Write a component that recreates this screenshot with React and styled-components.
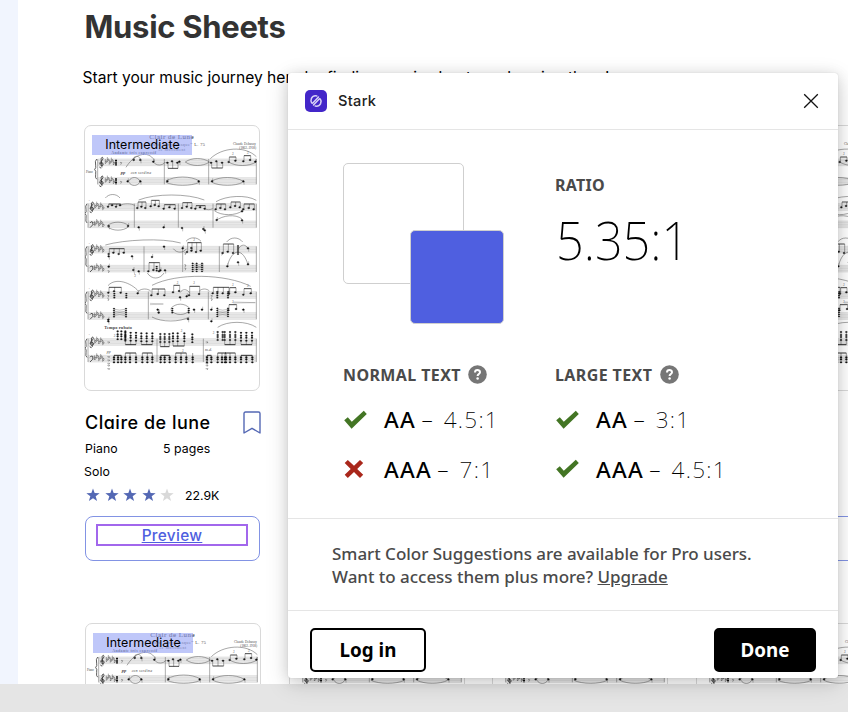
import React from "react";
import styled, { createGlobalStyle } from "styled-components";

const Global = createGlobalStyle`
  * { box-sizing: border-box; }
  html, body { margin: 0; padding: 0; overflow: hidden; }
  body { background: #e5e5e5; }
  h1, h2, h3, p { margin: 0; font-weight: inherit; }
`;

const display = `font-family: Inter, "Open Sans", sans-serif; font-feature-settings: "cv11";`;
const ui = `font-family: "Noto Sans", "Open Sans", sans-serif;`;

const Screen = styled.div`
  position: relative;
  width: 848px;
  height: 712px;
  overflow: hidden;
  background: #e5e5e5;
`;
const Page = styled.main`
  height: 684px;
  overflow: hidden;
  background: #fff;
  border-left: 18px solid #f1f5fe;
  padding-left: 66px;
  font-family: Inter, sans-serif;
  color: #000;
`;
const Title = styled.h1`
  ${display}
  font-size: 31px;
  line-height: 40px;
  padding: 7px 0 0 0.5px;
  font-weight: 700;
  letter-spacing: -0.3px;
  color: #333;
  white-space: nowrap;
`;
const Subtitle = styled.p`
  margin: 20px 0 0 -1.5px;
  font-size: 15.6px;
  line-height: 22px;
  white-space: nowrap;
`;
const Grid = styled.div`
  display: grid;
  grid-template-columns: repeat(4, 176px);
  column-gap: 27.7px;
  margin: ${(p) => (p.$second ? "62px 0 0 1px" : "36px 0 0")};
`;
const Cover = styled.div`
  position: relative;
  height: 266px;
  border: 1px solid #d9d9d9;
  border-radius: 7px;
  background: #fff;
  overflow: hidden;
`;
const Sheet = styled.svg`
  display: block;
  margin: -1px;
`;
const Level = styled.span`
  position: absolute;
  left: 7px;
  top: 9px;
  width: 100px;
  height: 20px;
  padding-left: 1px;
  background: rgba(152, 164, 246, 0.62);
  font-size: 12.4px;
  line-height: 20px;
  letter-spacing: 0.08px;
  text-align: center;
`;
const CardHead = styled.div`
  display: flex;
  justify-content: space-between;
  height: 46px;
  padding: 20px 0 0 1px;
  svg { margin-right: -1px; }
`;
const CardTitle = styled.h2`
  ${display}
  font-size: 18px;
  line-height: 24px;
  font-weight: 500;
  letter-spacing: 0.5px;
`;
const Meta = styled.div`
  display: flex;
  padding-left: ${(p) => (p.$flush ? 0 : 1)}px;
  font-size: 12.3px;
  line-height: 23px;
  letter-spacing: 0.08px;
  span:first-child { width: 78px; }
`;
const Rating = styled.div`
  display: flex;
  align-items: center;
  height: 24px;
  padding-left: 2px;
  font-size: 12.3px;
`;
const Star = styled.svg`
  margin-right: 4.5px;
`;
const RatingCount = styled.span`
  margin-left: 6.5px;
`;
const PreviewButton = styled.div`
  margin: 9px 0 0 1px;
  height: 45px;
  border: 1px solid #8293e4;
  border-radius: 8px;
  padding: 7px 11px 0 10px;
`;
const PreviewLabel = styled.div`
  ${display}
  height: 22px;
  border: 2px solid ${(p) => (p.$focused ? "#a267ec" : "transparent")};
  color: #4f5fe0;
  font-size: 15.4px;
  line-height: 19px;
  font-weight: 500;
  letter-spacing: 0.3px;
  text-align: center;
  text-decoration: underline;
`;

const Dialog = styled.section`
  position: absolute;
  left: 288px;
  top: 73px;
  width: 550px;
  height: 605px;
  display: flex;
  flex-direction: column;
  background: #fff;
  border-radius: 3px;
  box-shadow: 0 2px 14px rgba(0, 0, 0, 0.13), 0 6px 24px rgba(0, 0, 0, 0.14), 0 0 1px rgba(0, 0, 0, 0.22);
  ${ui}
`;
const DialogHeader = styled.header`
  display: flex;
  align-items: center;
  height: 57px;
  padding: 0 19px 0 17px;
  border-bottom: 1px solid #e5e5e5;
  font-family: Inter, sans-serif;
  font-size: 14.6px;
  font-weight: 500;
  letter-spacing: 0.3px;
  color: #222;
  span { flex: 1; margin-left: 11px; }
`;
const Results = styled.div`
  display: grid;
  grid-template-columns: 212px 1fr;
  grid-template-rows: 201px 1fr;
  height: 389px;
  padding: 33px 0 0 55px;
  border-bottom: 1px solid #e5e5e5;
`;
const Swatches = styled.div`
  position: relative;
`;
const Swatch = styled.div`
  position: ${(p) => (p.$front ? "absolute" : "static")};
  left: 67px;
  top: 67px;
  width: ${(p) => p.$size}px;
  height: ${(p) => p.$size}px;
  background: ${(p) => p.$color};
  border: 1px solid #cfcfcf;
  border-radius: 5px;
`;
const Label = styled.h3`
  display: flex;
  align-items: center;
  height: 22px;
  gap: 7.5px;
  font-size: 16px;
  font-weight: 700;
  letter-spacing: ${(p) => p.$tracking}px;
  color: #4a4a4a;
  white-space: nowrap;
  svg { margin-top: -1px; }
`;
const RatioBlock = styled.div`
  padding-top: 11px;
`;
const Ratio = styled.div`
  font-size: 54px;
  line-height: 66px;
  margin: 10px 0 0 1px;
  font-weight: 200;
  transform: scaleX(0.9);
  transform-origin: left;
  white-space: nowrap;
`;
const Checks = styled.div`
  svg { flex: none; }
`;
const CheckList = styled.div`
  margin-top: 9px;
`;
const Check = styled.div`
  display: flex;
  align-items: center;
  height: 49.5px;
  font-size: 22.5px;
  font-weight: 200;
  white-space: nowrap;
  svg { margin-right: 16px; }
  b { font-weight: 500; letter-spacing: 1.2px; margin-right: 5.5px; }
  span { margin-left: 11px; letter-spacing: 1.3px; }
`;
const Promo = styled.p`
  height: 92px;
  padding: 23px 44px 0;
  border-bottom: 1px solid #e5e5e5;
  font-size: 17px;
  line-height: 23px;
  font-weight: 500;
  letter-spacing: -0.03px;
  color: #4a4a4a;
  white-space: nowrap;
`;
const Footer = styled.footer`
  display: flex;
  justify-content: space-between;
  padding: 17px 22px 0;
`;
const Button = styled.button`
  width: ${(p) => p.$width}px;
  height: 44px;
  padding: 0 0 1px;
  border: 2px solid #000;
  border-radius: 5px;
  background: ${(p) => (p.$solid ? "#000" : "#fff")};
  color: ${(p) => (p.$solid ? "#fff" : "#000")};
  ${ui}
  font-size: 18.8px;
  font-weight: 700;
`;

/* Sheet music. Coordinates are in thirds of a pixel. */
const systems = [
  { x: 65, t: 123, b: 179, bars: [265, 398, 541], flats: 88 },
  { x: 36, t: 257, b: 309, bars: [175, 307, 411, 541], flats: 56 },
  { x: 36, t: 385, b: 442, bars: [204, 320, 430, 541], flats: 56 },
  { x: 36, t: 521, b: 584, bars: [217, 397, 541], flats: 56 },
  { x: 36, t: 662, b: 712, bars: [243, 382, 541], flats: 56 },
];
const beams = [
  [[274, 288, 304], 132, 151], [[405, 421, 438], 132, 150], [[458, 478], 130, 117], [[502, 522], 128, 113],
  [[96, 108, 120, 132], 264, 258], [[184, 196, 208], 268, 252], [[224, 236, 248], 263, 247], [[263, 280, 296], 270, 260],
  [[318, 332, 346], 268, 254], [[358, 372, 386], 270, 263], [[419, 433, 447], 272, 258], [[463, 477, 491], 266, 252], [[502, 518, 533], 272, 258],
  [[98, 112, 128, 143], 406, 392], [[333, 346, 360, 374], 400, 374], [[440, 455, 471], 403, 378],
  [[217, 232, 249], 458, 434],
  [[97, 114, 134], 522, 508], [[226, 245, 265], 530, 513], [[291, 309], 521, 502], [[339, 369], 530, 505], [[410, 424, 440, 457], 524, 508], [[459, 478], 525, 509], [[502, 524], 528, 512],
  [[457, 480], 575, 560],
];
const arcs = [
  [150, 148, 236, 128, 36], [232, 132, 268, 132, -12], [328, 132, 400, 132, -14], [328, 132, 400, 132, 14], [403, 122, 541, 116, 34],
  [458, 132, 540, 132, -14], [158, 189, 192, 189, 14], [158, 192, 192, 192, -14], [270, 189, 370, 189, 16], [270, 193, 370, 193, -12],
  [408, 189, 500, 189, 14], [408, 193, 500, 193, -12], [170, 124, 194, 124, 12],
  [88, 240, 132, 240, 14], [132, 262, 176, 262, 6], [188, 246, 385, 246, 20], [420, 251, 541, 247, 18], [94, 323, 158, 323, 14], [94, 326, 158, 326, -14],
  [415, 278, 500, 278, -16], [420, 308, 498, 303, 16], [385, 272, 410, 272, -4],
  [88, 381, 314, 375, 16], [330, 370, 375, 370, 14], [452, 372, 500, 372, 16], [292, 392, 332, 392, -14], [214, 465, 264, 465, -20],
  [455, 440, 516, 440, 50], [488, 392, 516, 392, 14],
  [96, 503, 188, 520, 26], [188, 519, 224, 519, 8], [228, 502, 524, 505, 38], [228, 597, 340, 597, -16], [284, 572, 342, 572, 18], [284, 576, 342, 576, -18],
  [312, 524, 340, 524, 12], [370, 519, 400, 519, 8], [425, 628, 541, 628, 20],
];
const dots = [
  [173, 126], [193, 126], [155, 190], [193, 190], [274, 190], [368, 190], [408, 190], [502, 190], [232, 131], [310, 131], [538, 131],
  [98, 324], [156, 324], [188, 328], [263, 328], [318, 330], [382, 333], [386, 337], [422, 306], [498, 307], [498, 280],
  [168, 415], [228, 417], [264, 386], [320, 391], [346, 390], [172, 456], [188, 460], [253, 457], [267, 457], [454, 445], [486, 433], [516, 439], [516, 391], [98, 446], [98, 415],
  [185, 526], [245, 575], [248, 584], [336, 603], [378, 575], [354, 575], [406, 575], [502, 575], [97, 605], [97, 610], [406, 610], [312, 538], [332, 535],
];
const stacks = [
  [486, 384, 3], [486, 402, 2], [350, 436, 5], [362, 436, 5], [378, 436, 5], [242, 446, 3],
  [114, 572, 5], [150, 572, 5], [424, 571, 5], [456, 571, 5], [115, 527, 3], [151, 527, 3], [424, 527, 3], [456, 527, 3], [289, 572, 3], [338, 572, 3],
];
const chordGroups = [
  [[125, 136, 148], 646, 0], [[148, 164, 180], 650, 680], [[196, 212, 229], 652, 680], [[253, 266, 280], 654, 686], [[291, 305, 325], 652, 684],
  [[349], 655, 672], [[425, 440], 648, 0], [[446, 462, 478], 648, 680], [[495, 511, 528], 650, 680],
];
const bassGroups = [
  [114, 126, 136], [148, 162, 180], [199, 214, 229], [254, 266, 281], [299, 315, 331], [350], [393, 406], [425, 438, 450], [447, 462, 478], [495, 511, 529],
];

function Staves() {
  return systems.map((s, i) => (
    <g key={i}>
      {[s.t, s.b].map((y) => (
        <g key={y}>
          <rect x={s.x} y={y} width={541 - s.x} height="20" fill="#000" opacity="0.06" />
          {[0, 5, 10, 15, 20].map((d) => (
            <path key={d} d={`M${s.x} ${y + d}H541`} stroke="#8c8c8c" strokeWidth="0.6" />
          ))}
        </g>
      ))}
      {[s.x, ...s.bars].map((x) => (
        <path key={x} d={`M${x} ${s.t}V${s.b + 20}`} stroke="#666" strokeWidth="1.6" />
      ))}
      <path
        d={`M${s.x - 3} ${s.t}q-6 6 -3 ${(s.b - s.t) / 3}q2 8 -3 ${(s.b + 20 - s.t) / 6}q5 4 3 ${(s.b + 20 - s.t) / 5}q-2 10 3 14`}
        fill="none" stroke="#222" strokeWidth="2.2"
      />
      {[s.t, s.b].map((y, k) => (
        <g key={y} fill="none" stroke="#111" strokeWidth="2">
          {k === 0 || i === 0 ? (
            <path d={`M${s.x + 11} ${y + 27}q-6 0 -5 -4M${s.x + 13} ${y + 25}l-3 -27q6 -7 6 1q-1 6 -8 10q-5 8 3 11q8 0 5 -7q-5 -5 -8 2`} />
          ) : (
            <path d={`M${s.x + 6} ${y + 6}q2 -6 8 -3q5 8 -8 17M${s.x + 18} ${y + 4}v2M${s.x + 18} ${y + 10}v2`} />
          )}
          {[0, 6, 12, 18, 24].map((d, n) => (
            <path key={d} strokeWidth="1.1" d={`M${s.flats + d} ${y - 4 + (n % 2 ? -3 : 4) + n}v14q6 -4 4 -8q-2 -2 -4 2`} />
          ))}
        </g>
      ))}
    </g>
  ));
}

function Score() {
  return (
    <Sheet width="176" height="266" viewBox="24 21 528 798">
      <g fontFamily="'Liberation Serif', serif" fill="#444">
        <text x="220" y="62" fontSize="21" textLength="133" stroke="#444" strokeWidth="0.3">Clair de Lune</text>
        <text x="216" y="83" fontSize="13" textLength="171">“Suite bergamasque” L. 75</text>
        <text x="247" y="99" fontSize="12" textLength="80">3e Movement</text>
        <text x="471" y="81" fontSize="10" textLength="69">Claude Debussy</text>
        <text x="490" y="93" fontSize="10" textLength="50">(1862–1918)</text>
        <text x="106" y="107" fontSize="12" fontWeight="700" textLength="134">Andante très expressif</text>
        <text x="30" y="165" fontSize="9">Piano</text>
        <text x="134" y="169" fontSize="14" fontWeight="700" fontStyle="italic">pp</text>
        <text x="164" y="168" fontSize="11" fontStyle="italic" textLength="61">con sordina</text>
        <text x="85" y="634" fontSize="13" fontWeight="700" textLength="83">Tempo rubato</text>
        <text x="92" y="704" fontSize="12" fontStyle="italic">pp</text>
        <text x="387" y="700" fontSize="12" fontStyle="italic">m.d.</text>
        {[[468, 110], [513, 108], [352, 369], [175, 478], [302, 497], [352, 499], [468, 504], [513, 507], [468, 556], [113, 656], [314, 642], [410, 648], [318, 702]].map(([x, y]) => (
          <text key={`${x}-${y}`} x={x} y={y} fontSize="9" fontStyle="italic">3</text>
        ))}
        {[[38, 249], [38, 377], [38, 512], [38, 652]].map(([x, y]) => (
          <text key={y} x={x} y={y} fontSize="6">7</text>
        ))}
      </g>
      <Staves />
      <g fill="none" stroke="#444" strokeWidth="1.4">
        {arcs.map(([x1, y1, x2, y2, h], i) => (
          <path key={i} d={`M${x1} ${y1}C${x1 + (x2 - x1) * 0.25} ${y1 - h} ${x2 - (x2 - x1) * 0.25} ${y2 - h} ${x2} ${y2}`} />
        ))}
        <path strokeWidth="0.8" d="M222 556l40 2-40 2M472 552l66 2M472 555l66-1M176 470l-2-12" />
      </g>
      <g stroke="#111" strokeWidth="1.1" fill="#111">
        {beams.map(([xs, y, by], i) => (
          <g key={i}>
            <path d={`M${xs[0] + 2} ${by}H${xs[xs.length - 1] + 2}`} strokeWidth="2.3" />
            {xs.map((x, k) => (
              <g key={x}>
                <path d={`M${x + 2} ${y}V${by}`} />
                <ellipse cx={x} cy={y + (k % 2 ? -2 : 2)} rx="3" ry="2.3" />
              </g>
            ))}
          </g>
        ))}
        {dots.map(([x, y], i) => (
          <g key={i}>
            <ellipse cx={x} cy={y} rx="3" ry="2.4" />
            <path d={`M${x + 2} ${y}v${i % 2 ? 10 : -9}`} strokeWidth="0.8" />
          </g>
        ))}
        {stacks.map(([x, y, n], i) => (
          <g key={i} strokeWidth="0.5">
            {Array.from({ length: n }, (_, k) => <ellipse key={k} cx={x} cy={y + k * 6} rx="3" ry="2" />)}
          </g>
        ))}
        {[[115, 574], [424, 574], [352, 438]].map(([x, y]) => (
          <path key={x} d={`M${x} ${y}q16 5 32 0M${x} ${y + 6}q16 4 32 0M${x} ${y + 12}q16 -4 32 0M${x} ${y + 18}q16 -5 32 0`} fill="none" strokeWidth="0.8" />
        ))}
        {chordGroups.map(([xs, y, by], i) => (
          <g key={i} strokeWidth="0.4">
            {by > 0 && <path d={`M${xs[0]} ${by}H${xs[xs.length - 1]}`} strokeWidth="2.6" />}
            {xs.map((x) => (
              <g key={x}>
                <path d={`M${x} ${y - 8}V${by || y + 18}`} strokeWidth="1" />
                {[-6, 3, 9, 18].map((d) => <ellipse key={d} cx={x} cy={y + d} rx="3.4" ry="2.3" />)}
              </g>
            ))}
          </g>
        ))}
        {bassGroups.map((xs, i) => (
          <g key={i} strokeWidth="0.4">
            <path d={`M${xs[0]} ${i % 3 ? 705 : 712}H${xs[xs.length - 1]}`} strokeWidth="2.6" />
            {xs.map((x) => (
              <g key={x}>
                <path d={`M${x} ${i % 3 ? 705 : 712}V730`} strokeWidth="1.2" />
                {[718, 724, 733].map((y) => <ellipse key={y} cx={x} cy={y} rx="3.6" ry="2.5" />)}
              </g>
            ))}
          </g>
        ))}
        {[98, 393].map((x) => [672, 716, 726, 736, 742, 752].map((y) => <path key={`${x}${y}`} d={`M${x - 4} ${y}h7l-3 4`} fill="none" />))}
        {[[97, 532], [97, 542], [407, 532], [407, 542], [98, 458], [328, 440], [328, 450], [438, 405], [328, 404], [135, 133], [135, 190]].map(([x, y], i) => (
          <path key={i} d={`M${x - 3} ${y}l5 1-3 6`} fill="none" />
        ))}
        <path d="M120 125v18M120 181v18" strokeWidth="6" strokeDasharray="4 1.5" />
      </g>
    </Sheet>
  );
}

function SheetCard({ focused }) {
  return (
    <article>
      <Cover>
        <Score />
        <Level>Intermediate</Level>
      </Cover>
      <CardHead>
        <CardTitle>Claire de lune</CardTitle>
        <svg width="18" height="24" viewBox="0 0 18 24">
          <path d="M1 22V2.5Q1 1 2.5 1h13Q17 1 17 2.5V22l-8-4.7z" fill="none" stroke="#5468b4" strokeWidth="1.4" strokeLinejoin="round" />
        </svg>
      </CardHead>
      <Meta><span>Piano</span><span>5 pages</span></Meta>
      <Meta $flush><span>Solo</span></Meta>
      <Rating>
        {[1, 1, 1, 1, 0].map((filled, i) => (
          <Star key={i} width="14" height="14" viewBox="0 0 14 14">
            <path d="M7 .4l1.65 4.7 5 .12-3.97 3.03 1.42 4.8L7 10.2l-4.1 2.85 1.42-4.8L.35 5.22l5-.12z" fill={filled ? "#5468b4" : "#d9d9d9"} />
          </Star>
        ))}
        <RatingCount>22.9K</RatingCount>
      </Rating>
      <PreviewButton><PreviewLabel $focused={focused}>Preview</PreviewLabel></PreviewButton>
    </article>
  );
}

const Help = () => (
  <svg width="19" height="19" viewBox="0 0 19 19">
    <circle cx="9.5" cy="9.5" r="9.3" fill="#767676" />
    <path d="M7 7.5C7 4.3 12.1 4.4 12 7.3c0 1.8-2.4 1.8-2.4 3.8" fill="none" stroke="#fff" strokeWidth="2" />
    <circle cx="9.6" cy="13.4" r="1.25" fill="#fff" />
  </svg>
);
const Tick = () => (
  <svg width="25" height="20" viewBox="0 0 25 20">
    <path d="M1.2 10.3l3.6-3.1 4 4.5L20.8.8l3 3.2L8.6 18.8z" fill="#437524" />
  </svg>
);
const Cross = () => (
  <svg width="25" height="20" viewBox="0 0 25 20">
    <path d="M4.8 1L11 6.8 17 1l3.2 3.1-6 5.9 6 5.8-3.2 3.2-6-5.9-6.2 5.9-3.1-3.2 6-5.8-6-5.9z" fill="#a9271b" />
  </svg>
);
const StarkLogo = () => (
  <svg width="22" height="22" viewBox="0 0 22 22">
    <rect width="22" height="22" rx="5" fill="#4326c9" />
    <g fill="none" stroke="#d8d1f6" strokeWidth="1.5" strokeLinecap="round" strokeLinejoin="round">
      <path d="M11.8 5.9Q8 5.2 6.4 8.4q-1.1 2.8.3 4.5.7.5 1.4-.2l5.4-5.6" />
      <path d="M10.2 16.1q3.8.7 5.4-2.5 1.1-2.8-.3-4.5-.7-.5-1.4.2l-5.4 5.6" />
    </g>
  </svg>
);
const Close = () => (
  <svg width="16" height="16" viewBox="0 0 16 16">
    <path d="M1.2 1.2l13.6 13.6M14.8 1.2L1.2 14.8" stroke="#111" strokeWidth="1.3" />
  </svg>
);

function CheckGroup({ label, rows }) {
  return (
    <Checks>
      <Label $tracking={0.4}>{label} <Help /></Label>
      <CheckList>
        {rows.map(([level, value, pass]) => (
          <Check key={level}>
            {pass ? <Tick /> : <Cross />}
            <b>{level}</b>–<span>{value}</span>
          </Check>
        ))}
      </CheckList>
    </Checks>
  );
}

export default function App() {
  return (
    <Screen>
      <Global />
      <Page>
        <Title>Music Sheets</Title>
        <Subtitle>Start your music journey here by finding music sheets and saving them!</Subtitle>
        <Grid>{[0, 1, 2, 3].map((i) => <SheetCard key={i} focused={i === 0} />)}</Grid>
        <Grid $second>{[0, 1, 2, 3].map((i) => <SheetCard key={i} />)}</Grid>
      </Page>
      <Dialog>
        <DialogHeader><StarkLogo /><span>Stark</span><Close /></DialogHeader>
        <Results>
          <Swatches>
            <Swatch $size={121} $color="#fff" />
            <Swatch $size={94} $color="#4f5fe0" $front />
          </Swatches>
          <RatioBlock>
            <Label $tracking={0.3}>RATIO</Label>
            <Ratio>5.35:1</Ratio>
          </RatioBlock>
          <CheckGroup label="NORMAL TEXT" rows={[["AA", "4.5:1", true], ["AAA", "7:1", false]]} />
          <CheckGroup label="LARGE TEXT" rows={[["AA", "3:1", true], ["AAA", "4.5:1", true]]} />
        </Results>
        <Promo>
          Smart Color Suggestions are available for Pro users.<br />
          Want to access them plus more? <u>Upgrade</u>
        </Promo>
        <Footer>
          <Button $width={116}>Log in</Button>
          <Button $width={102} $solid>Done</Button>
        </Footer>
      </Dialog>
    </Screen>
  );
}
